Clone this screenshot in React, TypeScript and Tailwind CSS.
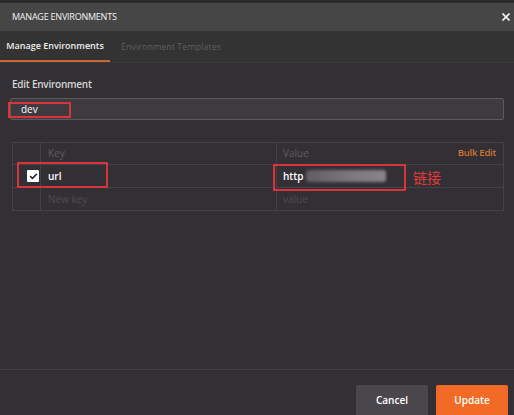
import React from 'react';
import { X, Check } from 'lucide-react';

const font = { fontFamily: '"Open Sans", "Noto Sans CJK SC", sans-serif' };

export default function App() {
    return (
        <div className="relative w-[514px] h-[415px] overflow-hidden bg-[#333035] flex flex-col" style={font}>
            <div className="h-[3px] bg-[#2b2b2b]" />

            {/* title bar */}
            <div className="h-[28px] bg-[#464646] flex items-center justify-between pl-[12px] pr-[2px]">
                <span className="text-[9px] text-[#f2f2f2] tracking-tight">MANAGE ENVIRONMENTS</span>
                <X className="h-[12px] w-[12px] text-white" strokeWidth={3.5} />
            </div>

            {/* tabs */}
            <div className="h-[32px] bg-[#333333] flex items-stretch border-b border-[#3c3a3d]">
                <div className="w-[110px] flex items-center justify-center border-b-2 border-[#c9692f]">
                    <span className="text-[9px] font-semibold text-[#eeeeee]">Manage Environments</span>
                </div>
                <div className="flex items-center pl-[11px]">
                    <span className="text-[9px] text-[#5f5d60]">Environment Templates</span>
                </div>
            </div>

            {/* body */}
            <div className="flex-1 px-[10px] pt-[14px]">
                <div className="pl-[2px] text-[10px] font-semibold text-[#d6d6d6] leading-[15px] tracking-tight">Edit Environment</div>
                <div className="mt-[6px] h-[22px] bg-[#3e3a40] border border-[#5d5a5e] rounded-[2px] flex items-center pl-[10px]">
                    <span className="text-[10px] text-white">dev</span>
                </div>

                <div className="mt-[22px] ml-[2px] border border-[#454247] text-[10px]">
                    <div className="flex h-[22px] border-b border-[#454247]">
                        <div className="w-[28px] border-r border-[#454247]" />
                        <div className="w-[236px] border-r border-[#454247] flex items-center pl-[7px] text-[#5e5b5f]">Key</div>
                        <div className="flex-1 flex items-center justify-between pl-[6px] pr-[7px]">
                            <span className="text-[#5e5b5f]">Value</span>
                            <span className="text-[9.5px] text-[#d37332] font-semibold tracking-tight">Bulk Edit</span>
                        </div>
                    </div>
                    <div className="flex h-[23px] border-b border-[#454247]">
                        <div className="w-[28px] border-r border-[#454247] flex items-center pl-[14px]">
                            <div className="h-[12px] w-[12px] bg-white rounded-[1px] flex items-center justify-center">
                                <Check className="h-[9px] w-[9px] text-[#222]" strokeWidth={4} />
                            </div>
                        </div>
                        <div className="w-[236px] border-r border-[#454247] flex items-center pl-[7px] text-white font-semibold">url</div>
                        <div className="flex-1 flex items-center pl-[6px]">
                            <span className="text-white font-semibold">http</span>
                            <div className="ml-[2px] h-[12px] w-[80px] rounded-[3px] bg-gradient-to-r from-[#6a686d] via-[#8a888c] to-[#9d9b9f] blur-[1.5px] opacity-80" />
                        </div>
                    </div>
                    <div className="flex h-[22px]">
                        <div className="w-[28px] border-r border-[#454247]" />
                        <div className="w-[236px] border-r border-[#454247] flex items-center pl-[7px] text-[#4f4c50]">New key</div>
                        <div className="flex-1 flex items-center pl-[6px] text-[#4f4c50]">value</div>
                    </div>
                </div>
            </div>

            {/* footer */}
            <div className="border-t border-[#413e43] pt-[15px] flex justify-end gap-[8px] pr-[6px]">
                <button className="w-[72px] h-[30px] bg-[#4a474c] text-white text-[10px] font-semibold rounded-t-[2px]">Cancel</button>
                <button className="w-[72px] h-[30px] bg-[#f26b26] text-white text-[10px] font-semibold rounded-t-[2px]">Update</button>
            </div>

            {/* red annotations */}
            <div className="absolute left-[8px] top-[102px] w-[63px] h-[16px] border-2 border-[#d8343a]" />
            <div className="absolute left-[17px] top-[162px] w-[91px] h-[26px] border-2 border-[#d8343a]" />
            <div className="absolute left-[273px] top-[164px] w-[133px] h-[27px] border-2 border-[#d8343a]" />
            <div className="absolute left-[413px] top-[168px] text-[14px] leading-[20px] text-[#e23a3a]">链接</div>
        </div>
    );
}
